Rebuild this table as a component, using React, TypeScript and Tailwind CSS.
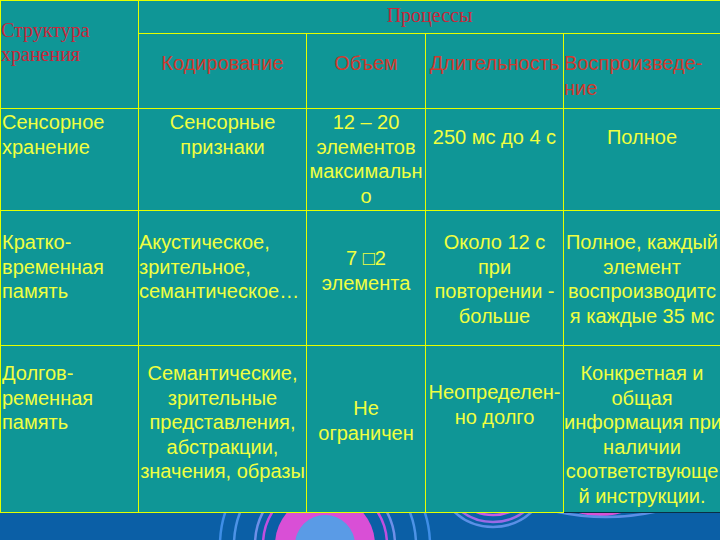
import React from "react";

type Line = string;

function Lines({ lines }: { lines: Line[] }) {
  return (
    <>
      {lines.map((l, i) => (
        <div key={i} className="whitespace-nowrap">
          {l}
        </div>
      ))}
    </>
  );
}

function Decor() {
  return (
    <svg width="720" height="27" viewBox="0 513 720 27" className="block">
      <g fill="none" strokeWidth="2.5">
        <circle cx="325" cy="545" r="50" fill="#d94fd6" stroke="none" />
        <circle cx="325" cy="545" r="30" fill="#5a9be6" stroke="none" />
        <circle cx="325" cy="545" r="62" stroke="#c04fe0" />
        <circle cx="325" cy="545" r="70" stroke="#6f8fe8" />
        <circle cx="325" cy="545" r="91" stroke="#4d93e6" />
        <circle cx="325" cy="545" r="105" stroke="#3f8ee6" />
        <circle cx="493" cy="470" r="45" stroke="#c25de6" />
        <circle cx="493" cy="470" r="52" stroke="#9a6ae6" />
        <circle cx="493" cy="470" r="57" stroke="#5a8fe6" />
        <circle cx="600" cy="437" r="79" fill="#d94fd6" stroke="none" />
        <circle cx="606" cy="284" r="233" stroke="#5a8fe6" />
      </g>
    </svg>
  );
}

export default function App() {
  const cell = "bg-[#0f9696] relative";
  return (
    <div className="w-[720px] h-[540px] overflow-hidden bg-[#0b5fa6] font-['Liberation_Sans',Arial,sans-serif] text-[20px] leading-[24.5px] text-[#f0ff40]">
      <div className="grid grid-cols-[137px_167px_118px_137px_156px] grid-rows-[32px_74px_101px_134px_166px] gap-px bg-[#e4ff00] pt-px pl-px">
        {/* header */}
        <div
          className={`${cell} row-span-2 pt-[17px] font-['Liberation_Serif','Times_New_Roman',serif] text-[#c8283c] leading-[24px]`}
        >
          <Lines lines={["Структура", "хранения"]} />
        </div>
        <div
          className={`${cell} col-span-4 pt-[2px] text-center font-['Liberation_Serif','Times_New_Roman',serif] text-[#c8283c] leading-[24px]`}
        >
          Процессы
        </div>
        <div className={`${cell} pt-[17px] text-center text-[#d03a2e]`}>Кодирование</div>
        <div className={`${cell} pt-[17px] text-center text-[#d03a2e]`}>Объем</div>
        <div className={`${cell} pt-[17px] text-center text-[#d03a2e]`}>Длительность</div>
        <div className={`${cell} pt-[17px] text-[#d03a2e]`}>
          <Lines lines={["Воспроизведе-", "ние"]} />
        </div>

        {/* row 1 */}
        <div className={`${cell} pt-px pl-px`}>
          <Lines lines={["Сенсорное", "хранение"]} />
        </div>
        <div className={`${cell} pt-px text-center`}>
          <Lines lines={["Сенсорные", "признаки"]} />
        </div>
        <div className={`${cell} pt-px text-center`}>
          <Lines lines={["12 – 20", "элементов", "максимальн", "о"]} />
        </div>
        <div className={`${cell} pt-[16px] text-center`}>250 мс до 4 с</div>
        <div className={`${cell} pt-[16px] text-center`}>Полное</div>

        {/* row 2 */}
        <div className={`${cell} pt-[19px] pl-px`}>
          <Lines lines={["Кратко-", "временная", "память"]} />
        </div>
        <div className={`${cell} pt-[19px]`}>
          <Lines lines={["Акустическое,", "зрительное,", "семантическое…"]} />
        </div>
        <div className={`${cell} pt-[35px] text-center`}>
          <Lines lines={["7 □2", "элемента"]} />
        </div>
        <div className={`${cell} pt-[19px] text-center`}>
          <Lines lines={["Около 12 с", "при", "повторении -", "больше"]} />
        </div>
        <div className={`${cell} pt-[19px] text-center`}>
          <Lines lines={["Полное, каждый", "элемент", "воспроизводитс", "я каждые 35 мс"]} />
        </div>

        {/* row 3 */}
        <div className={`${cell} pt-[15px] pl-px`}>
          <Lines lines={["Долгов-", "ременная", "память"]} />
        </div>
        <div className={`${cell} pt-[15px] text-center`}>
          <Lines
            lines={[
              "Семантические,",
              "зрительные",
              "представления,",
              "абстракции,",
              "значения, образы",
            ]}
          />
        </div>
        <div className={`${cell} pt-[50px] text-center`}>
          <Lines lines={["Не", "ограничен"]} />
        </div>
        <div className={`${cell} pt-[34px] text-center`}>
          <Lines lines={["Неопределен-", "но долго"]} />
        </div>
        <div className={`${cell} pt-[15px] text-center`}>
          <Lines
            lines={[
              "Конкретная и",
              "общая",
              "информация при",
              "наличии",
              "соответствующе",
              "й инструкции.",
            ]}
          />
        </div>
      </div>
      <div className="flex h-px">
        <div className="w-[564px] bg-[#e4ff00]" />
        <div className="flex-1 bg-[#0a2f45]" />
      </div>
      <Decor />
    </div>
  );
}
